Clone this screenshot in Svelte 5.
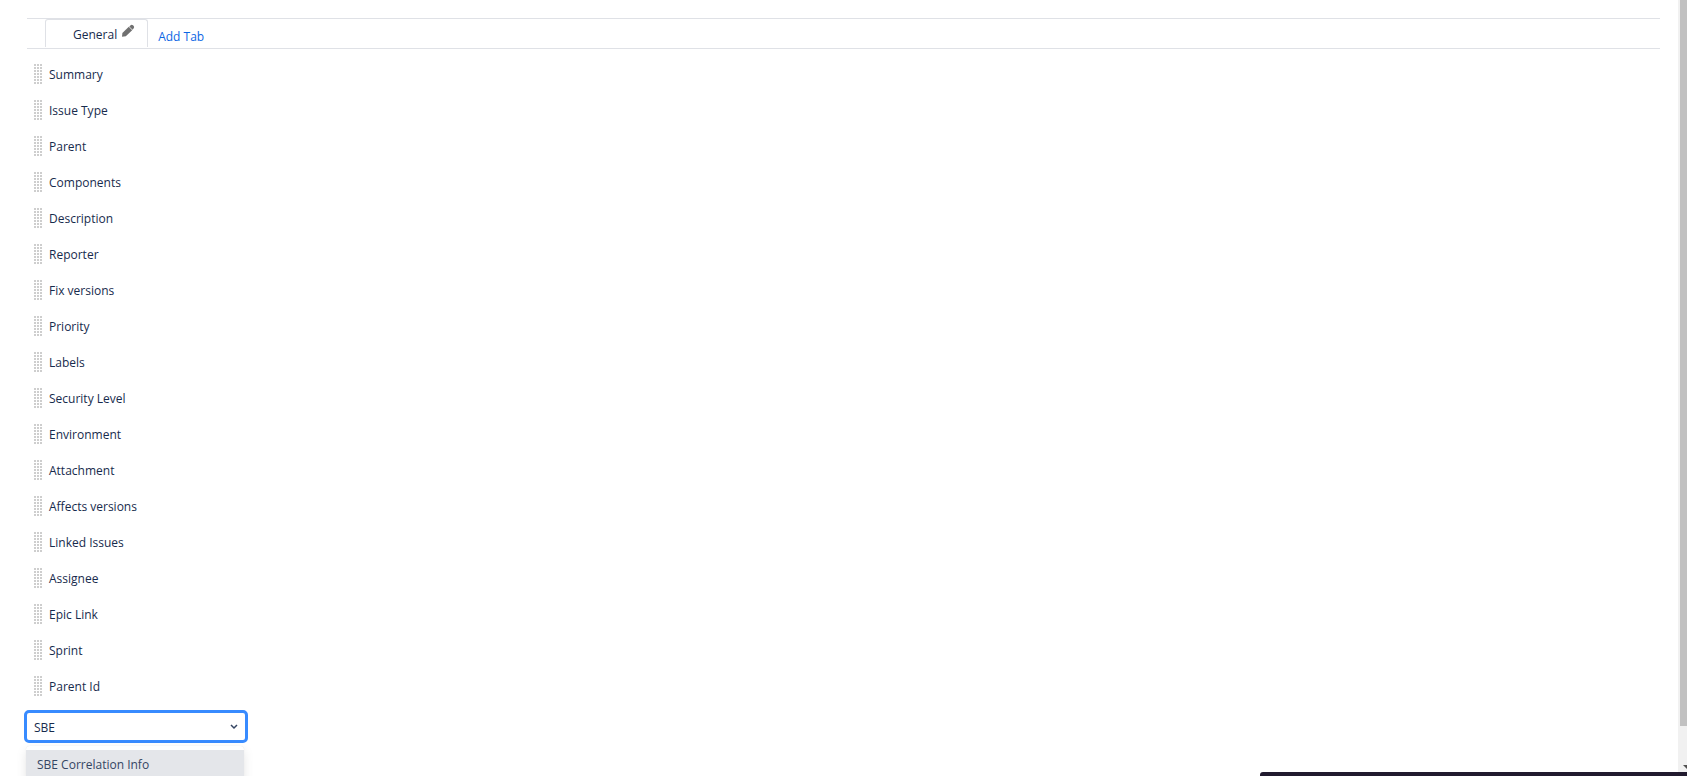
<script>
    let query = $state("SBE");

    const fields = [
        "Summary",
        "Issue Type",
        "Parent",
        "Components",
        "Description",
        "Reporter",
        "Fix versions",
        "Priority",
        "Labels",
        "Security Level",
        "Environment",
        "Attachment",
        "Affects versions",
        "Linked Issues",
        "Assignee",
        "Epic Link",
        "Sprint",
        "Parent Id",
    ];
</script>

<div class="page">
    <main>
        <nav class="tabs">
            <div class="tab">
                <span class="name">General</span>
                <button class="edit" aria-label="Edit tab name">
                    <svg width="14" height="14" viewBox="0 0 14 14" fill="#707070">
                        <path d="M1 12.8 L1.4 9 L7.8 2.8 L11.2 6.2 L4.8 12.2 Z" />
                        <path d="M8.3 2.4 L10 1 Q11 0.5 12 1.3 L12.7 2 Q13.5 3 12.9 4 L11.6 5.7 Z" />
                    </svg>
                </button>
            </div>
            <a class="add-tab" href="#add">Add Tab</a>
        </nav>

        <ul class="fields">
            {#each fields as field}
                <li>
                    <span class="handle"></span>
                    <span class="name">{field}</span>
                </li>
            {/each}
        </ul>

        <div class="picker">
            <input type="text" role="combobox" aria-label="Select field" aria-expanded="true" aria-controls="field-options" bind:value={query} />
            <svg class="chevron" width="8" height="6" viewBox="0 0 8 6" fill="none" stroke="#344563" stroke-width="1.5">
                <path d="M1 1 L4 4 L7 1" />
            </svg>
            <ul class="options" id="field-options" role="listbox">
                <li role="option" aria-selected="true">SBE Correlation Info</li>
            </ul>
        </div>
    </main>

    <div class="scrollbar">
        <div class="thumb"></div>
        <svg width="4" height="4" viewBox="0 0 4 4" fill="#505050">
            <path d="M0 0 H4 V4 Z" />
        </svg>
    </div>

    <div class="toast"></div>
</div>

<style>
    :global(body) {
        margin: 0;
        background: #fff;
    }

    .page {
        position: relative;
        display: flex;
        height: 100vh;
        overflow: hidden;
        color: #172b4d;
        font-family: "Segoe UI", "Open Sans", sans-serif;
        font-size: 12px;
        line-height: 20px;
    }

    main {
        flex: 1;
        padding: 18px 18px 0 27px;
    }

    ul {
        list-style: none;
        margin: 0;
        padding: 0;
    }

    .tabs {
        display: flex;
        box-sizing: border-box;
        height: 31px;
        padding-left: 18px;
        border-top: 1px solid #dfe1e6;
        border-bottom: 1px solid #dfe1e6;
    }

    .tab {
        display: flex;
        align-items: center;
        gap: 4px;
        box-sizing: border-box;
        height: 28px;
        padding: 0 12px 0 27px;
        border: 1px solid #dfe1e6;
        border-bottom: 0;
        border-radius: 3px 3px 0 0;
    }

    .name {
        padding-top: 2px;
    }

    .edit {
        display: flex;
        align-self: flex-start;
        margin-top: 4px;
        padding: 0;
        border: 0;
        background: none;
    }

    .add-tab {
        padding: 8px 10px 0;
        color: #0c66e4;
        text-decoration: none;
    }

    .fields {
        padding: 7px 0 6px 7px;
    }

    .fields li {
        display: flex;
        align-items: center;
        gap: 7px;
        height: 36px;
    }

    .handle {
        width: 8px;
        height: 21px;
        background-color: #cecece;
        background-image:
            linear-gradient(to right, transparent 2px, #fff 2px),
            linear-gradient(to bottom, transparent 2px, #fff 2px);
        background-size: 3px 3px;
    }

    .picker {
        position: relative;
        width: 224px;
        margin-left: -3px;
    }

    input {
        box-sizing: border-box;
        width: 100%;
        height: 33px;
        padding: 2px 30px 0 7px;
        border: 3px solid #388bff;
        border-radius: 5px;
        outline: 0;
        color: inherit;
        font: inherit;
    }

    .chevron {
        position: absolute;
        top: 14px;
        right: 10px;
    }

    .options {
        position: absolute;
        top: 36px;
        left: 2px;
        width: 218px;
        padding: 4px 0;
        border-radius: 4px;
        background: #fff;
        box-shadow: 0 4px 11px rgba(0, 0, 0, 0.1), 0 0 1px rgba(0, 0, 0, 0.1);
    }

    .options li {
        padding: 5px 11px 4px;
        background: #e4e6ea;
        color: #344563;
    }

    .scrollbar {
        display: flex;
        flex-direction: column;
        align-items: flex-end;
        justify-content: space-between;
        box-sizing: border-box;
        width: 9px;
        padding-bottom: 7px;
        background: #f1f1f1;
    }

    .thumb {
        flex-basis: 726px;
        width: 7px;
        background: #c1c1c1;
    }

    .toast {
        position: absolute;
        right: 0;
        bottom: 0;
        width: 427px;
        height: 4px;
        border-top-left-radius: 3px;
        background: #211a2e;
    }
</style>
